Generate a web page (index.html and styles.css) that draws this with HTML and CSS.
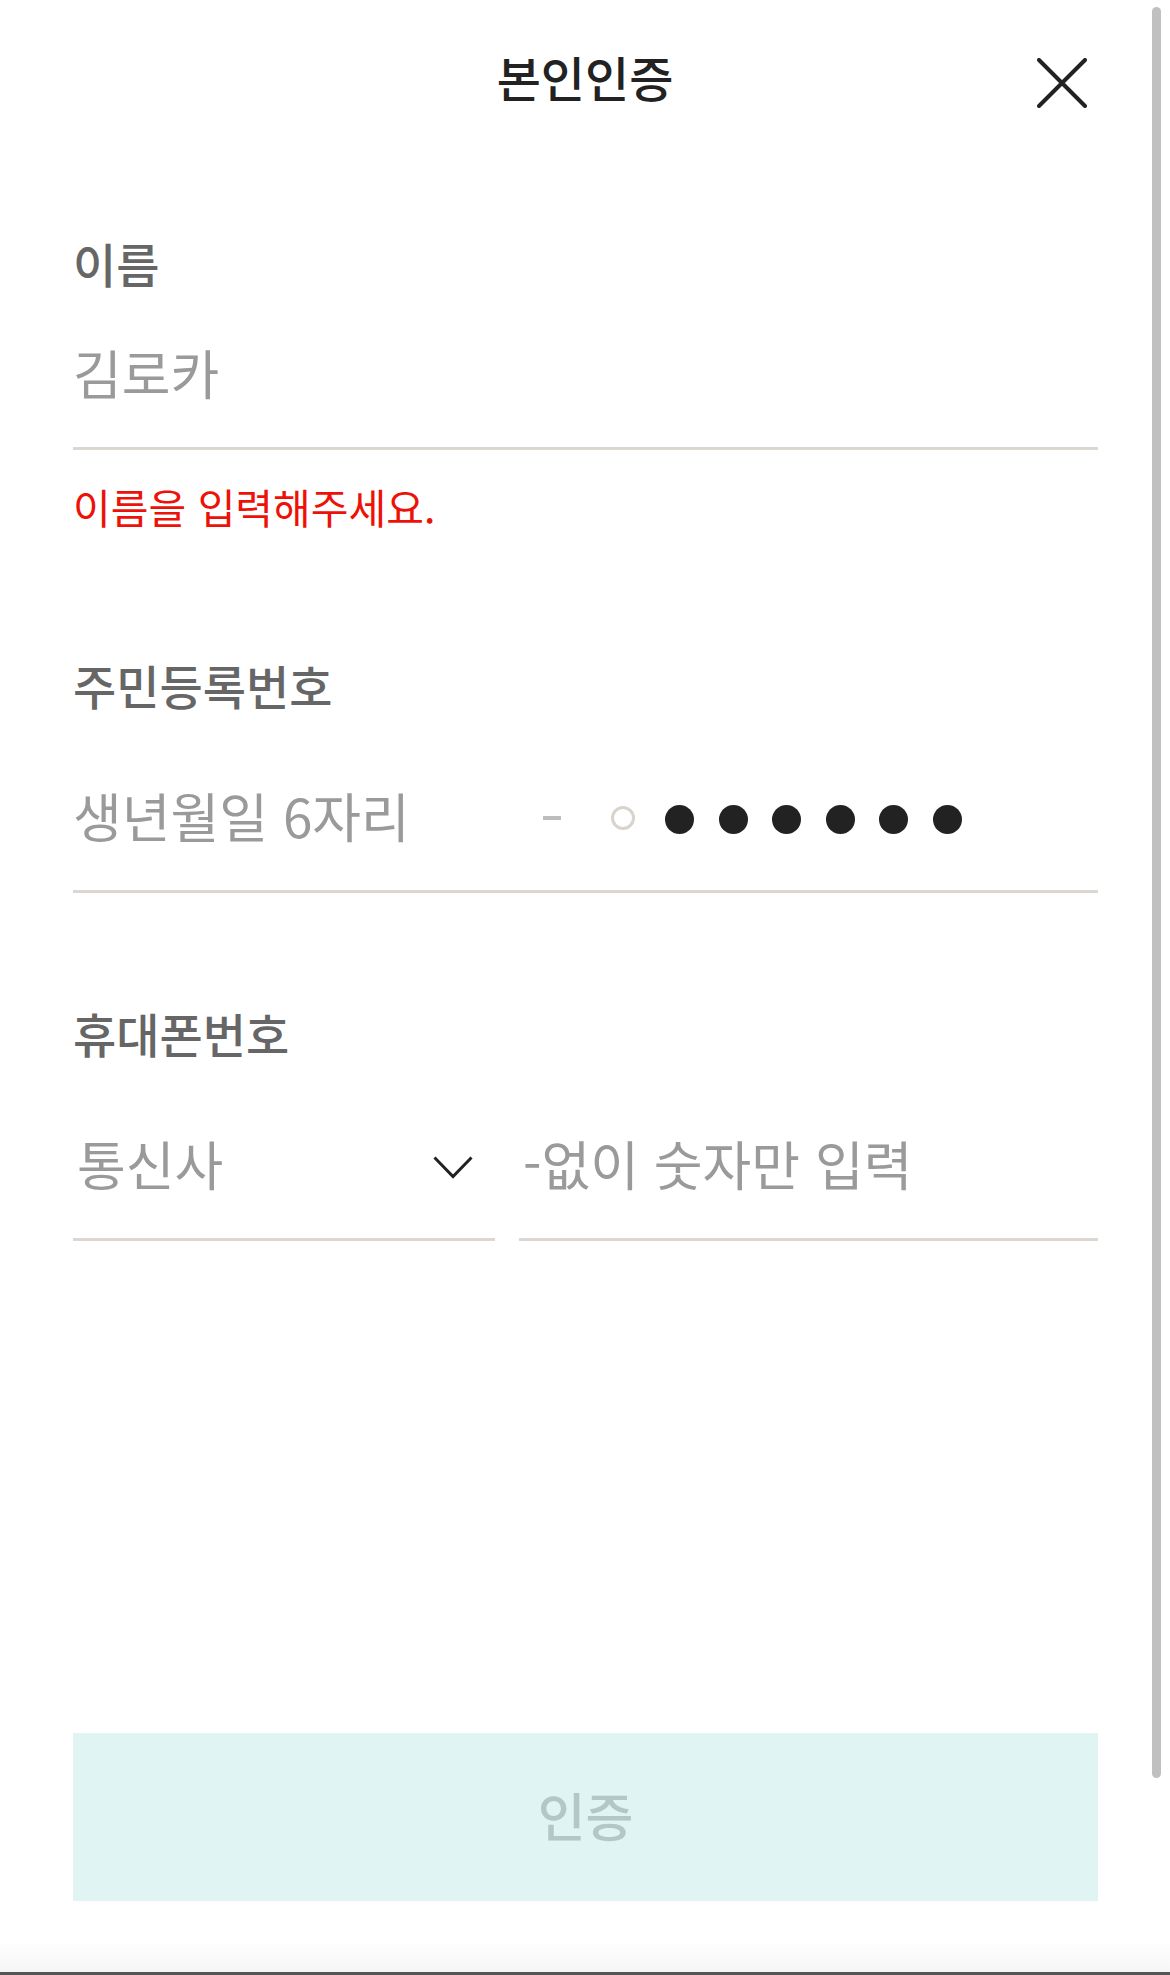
FILE: index.html
```html
<!DOCTYPE html>
<html lang="ko">
<head>
    <meta charset="UTF-8">
    <meta name="viewport" content="width=device-width, initial-scale=1.0">
    <title>본인인증</title>
    <link rel="stylesheet" href="styles.css">
</head>
<body>
    <div class="page">
        <header class="header">
            <h1 class="title">본인인증</h1>
            <button class="close-btn" aria-label="닫기">
                <svg width="50" height="50" viewBox="0 0 50 50">
                    <path d="M2 2 L48 48 M48 2 L2 48" stroke="#222" stroke-width="4" stroke-linecap="round" fill="none"/>
                </svg>
            </button>
        </header>

        <form class="form" onsubmit="return false;">
            <div class="field">
                <label class="field-label" for="name">이름</label>
                <div class="field-input field-input--name">
                    <input id="name" type="text" placeholder="김로카">
                </div>
                <p class="error-msg">이름을 입력해주세요.</p>
            </div>

            <div class="field field--rrn">
                <label class="field-label" for="birth">주민등록번호</label>
                <div class="field-input rrn-row">
                    <div class="birth">
                        <input id="birth" type="text" placeholder="생년월일 6자리">
                    </div>
                    <span class="rrn-dash"></span>
                    <span class="rrn-digit"></span>
                    <div class="rrn-mask">
                        <span class="dot"></span>
                        <span class="dot"></span>
                        <span class="dot"></span>
                        <span class="dot"></span>
                        <span class="dot"></span>
                        <span class="dot"></span>
                    </div>
                </div>
            </div>

            <div class="field field--phone">
                <label class="field-label" for="phone">휴대폰번호</label>
                <div class="phone-row">
                    <div class="field-input select">
                        <span class="select-text">통신사</span>
                        <svg width="40" height="23" viewBox="0 0 40 23">
                            <polyline points="1.5,1.5 20,20.5 38.5,1.5" stroke="#222" stroke-width="3" fill="none"/>
                        </svg>
                    </div>
                    <div class="field-input phone">
                        <input id="phone" type="tel" placeholder="-없이 숫자만 입력">
                    </div>
                </div>
            </div>

            <button class="submit-btn" type="submit" disabled>인증</button>
        </form>

        <div class="scrollbar"></div>
        <div class="home-bar"></div>
    </div>
</body>
</html>
```

FILE: styles.css
```css
* {
    box-sizing: border-box;
}
body {
    margin: 0;
    padding: 0;
    background: #fff;
    font-family: 'Noto Sans CJK KR', 'Noto Sans', sans-serif;
    color: #222;
}
.page {
    position: relative;
    width: 1170px;
    height: 1975px;
    display: flex;
    flex-direction: column;
    background: linear-gradient(to bottom, #fff 1940px, #f6f6f6 1972px);
    overflow: hidden;
}
.header {
    height: 158px;
    display: grid;
    grid-template-columns: 1fr auto 1fr;
    align-items: center;
}
.title {
    grid-column: 2;
    margin: 0 0 6px;
    font-size: 48px;
    font-weight: 500;
    line-height: 54px;
    color: #222;
}
.close-btn {
    grid-column: 3;
    justify-self: end;
    margin-right: 83px;
    margin-top: 8px;
    padding: 0;
    border: none;
    background: none;
    width: 50px;
    height: 50px;
    cursor: pointer;
}
.close-btn svg {
    display: block;
}
.form {
    flex: 1;
    display: flex;
    flex-direction: column;
    padding: 78px 72px 74px 73px;
}
.field-label {
    display: block;
    font-size: 47px;
    font-weight: 500;
    line-height: 54px;
    padding-bottom: 6px;
    color: #666;
}
.field-input {
    height: 147px;
    display: flex;
    align-items: center;
    border-bottom: 3px solid #dcd7d0;
    margin-top: 28px;
}
.field-input--name {
    margin-top: 7px;
}
.field-input input {
    width: 100%;
    border: none;
    outline: none;
    background: transparent;
    padding: 0 0 6px;
    font-family: inherit;
    font-size: 53px;
    color: #222;
}
.field-input input::placeholder {
    color: #9a9a9a;
}
.error-msg {
    margin: 31px 0 0;
    font-size: 41px;
    line-height: 50px;
    color: #ee1108;
}
.field--rrn {
    margin-top: 127px;
}
.birth {
    flex: 0 0 470px;
}
.rrn-dash {
    width: 18px;
    height: 4px;
    background: #bdbdbd;
    margin-right: 50px;
}
.rrn-digit {
    width: 24px;
    height: 24px;
    border: 3.5px solid #d9d3cc;
    border-radius: 50%;
    margin-right: 30px;
}
.rrn-mask {
    display: flex;
    gap: 24.6px;
    margin-top: 2px;
}
.dot {
    width: 29px;
    height: 29px;
    border-radius: 50%;
    background: #222;
}
.field--phone {
    margin-top: 113px;
}
.phone-row {
    display: flex;
    gap: 24px;
    margin-top: 28px;
}
.phone-row .field-input {
    margin-top: 0;
}
.select {
    flex: 0 0 422px;
    justify-content: space-between;
    padding: 0 22px 0 4px;
}
.select-text {
    font-size: 53px;
    padding-bottom: 6px;
    color: #9a9a9a;
}
.select svg {
    display: block;
    margin-top: 2px;
}
.phone {
    flex: 1;
    padding-left: 4px;
}
.submit-btn {
    margin-top: auto;
    height: 168px;
    width: 100%;
    padding: 0 0 6px;
    border: none;
    background: #e0f4f3;
    font-family: inherit;
    font-size: 52px;
    font-weight: 500;
    color: #b4c6c6;
    cursor: default;
}
.scrollbar {
    position: absolute;
    top: 7px;
    right: 9px;
    width: 9px;
    height: 1771px;
    border-radius: 5px;
    background: #c0c0c0;
}
.home-bar {
    position: absolute;
    left: 0;
    right: 0;
    bottom: 0;
    height: 3px;
    background: #555;
}
```
